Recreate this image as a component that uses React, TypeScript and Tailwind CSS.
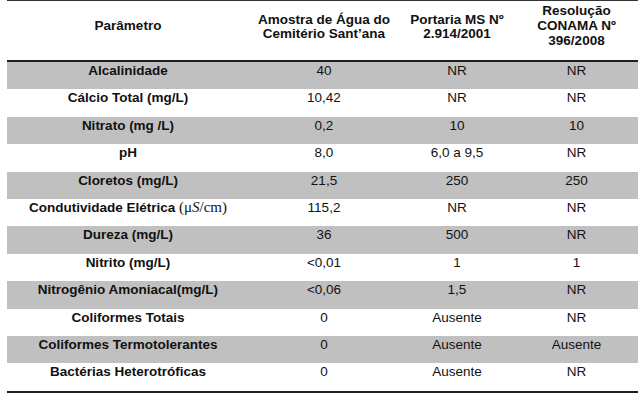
const ROWS: { param: React.ReactNode; amostra: string; portaria: string; conama: string }[] = [
  { param: 'Alcalinidade', amostra: '40', portaria: 'NR', conama: 'NR' },
  { param: 'Cálcio Total (mg/L)', amostra: '10,42', portaria: 'NR', conama: 'NR' },
  { param: 'Nitrato (mg /L)', amostra: '0,2', portaria: '10', conama: '10' },
  { param: 'pH', amostra: '8,0', portaria: '6,0 a 9,5', conama: 'NR' },
  { param: 'Cloretos (mg/L)', amostra: '21,5', portaria: '250', conama: '250' },
  {
    param: (
      <>
        Condutividade Elétrica{' '}
        <span className="font-['Liberation_Serif',serif] font-normal text-[15px]">
          (μ<i>S</i>/cm)
        </span>
      </>
    ),
    amostra: '115,2', portaria: 'NR', conama: 'NR',
  },
  { param: 'Dureza (mg/L)', amostra: '36', portaria: '500', conama: 'NR' },
  { param: 'Nitrito (mg/L)', amostra: '<0,01', portaria: '1', conama: '1' },
  { param: 'Nitrogênio Amoniacal(mg/L)', amostra: '<0,06', portaria: '1,5', conama: 'NR' },
  { param: 'Coliformes Totais', amostra: '0', portaria: 'Ausente', conama: 'NR' },
  { param: 'Coliformes Termotolerantes', amostra: '0', portaria: 'Ausente', conama: 'Ausente' },
  { param: 'Bactérias Heterotróficas', amostra: '0', portaria: 'Ausente', conama: 'NR' },
];

const COLS = 'grid grid-cols-[242px_150px_116px_123px]';

export default function App() {
  return (
    <div className="w-[640px] h-[411px] bg-white pl-[7px] font-['Liberation_Sans',Arial,sans-serif] text-[13.5px] text-[#111]">
      <div className="w-[631px]">
        {/* header */}
        <div className={`${COLS} h-[62px] border-t-[1.5px] border-b-2 border-t-[#333] border-b-[#1e1e1e] font-bold leading-[15px] text-center`}>
          <div className="flex items-center justify-center pb-[11px]">Parâmetro</div>
          <div className="flex items-center justify-center pb-[8px] leading-[14px]">
            Amostra de Água do<br />Cemitério Sant’ana
          </div>
          <div className="flex items-center justify-center pb-[8px] leading-[14px]">
            Portaria MS Nº<br />2.914/2001
          </div>
          <div className="flex items-center justify-center pb-[11px]">
            Resolução<br />CONAMA Nº<br />396/2008
          </div>
        </div>

        {/* rows */}
        {ROWS.map((r, i) => (
          <div key={i} className={`${COLS} h-[27.4px] leading-[15px] pt-[1px] text-center ${i % 2 === 0 ? 'bg-[#c0c0c0]' : 'bg-white'}`}>
            <div className="font-bold">{r.param}</div>
            <div>{r.amostra}</div>
            <div>{r.portaria}</div>
            <div>{r.conama}</div>
          </div>
        ))}

        <div className="h-[2px] bg-[#1e1e1e]" />
      </div>
    </div>
  );
}
